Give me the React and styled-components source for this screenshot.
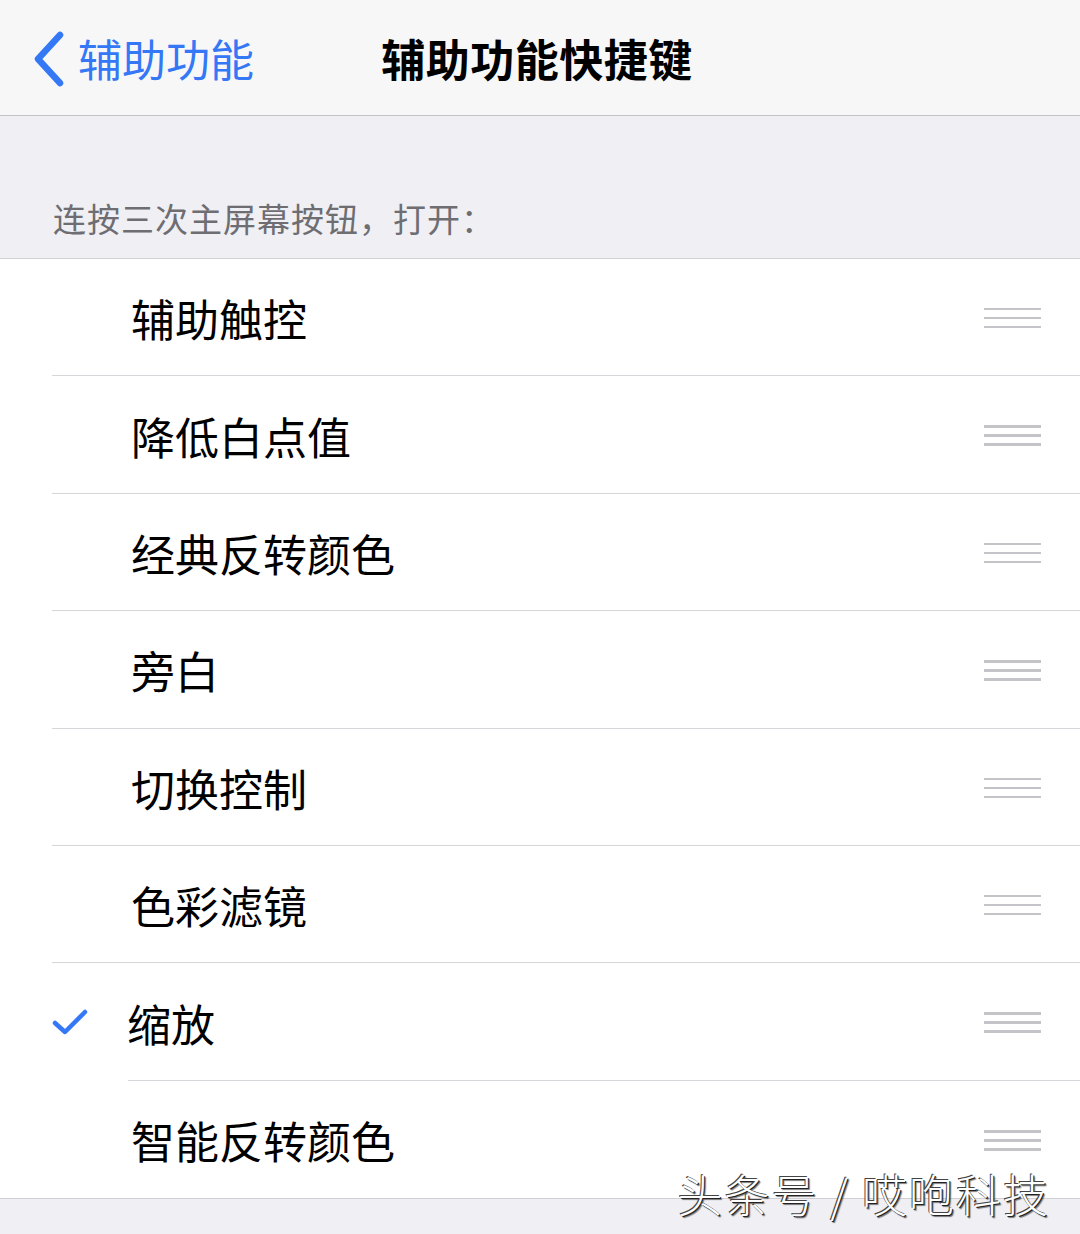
import styled, { createGlobalStyle } from 'styled-components'

const GlobalStyle = createGlobalStyle`
  html, body {
    margin: 0;
    padding: 0;
    background: #efeff4;
  }
  body {
    font-family: "Noto Sans CJK SC", "Noto Sans", sans-serif;
  }
`

const items = [
  { label: '辅助触控' },
  { label: '降低白点值' },
  { label: '经典反转颜色' },
  { label: '旁白' },
  { label: '切换控制' },
  { label: '色彩滤镜' },
  { label: '缩放', checked: true },
  { label: '智能反转颜色', last: true },
]

const ChevronLeft = () => (
  <svg width="36" height="56" viewBox="0 0 36 56">
    <path d="M29 4 L7 28 L29 52" fill="none" stroke="#3478f6" strokeWidth="6.5" strokeLinecap="round" strokeLinejoin="round" />
  </svg>
)

const Check = () => (
  <svg width="36" height="28" viewBox="0 0 36 28">
    <path d="M3 15 L13 24 L33 4" fill="none" stroke="#3478f6" strokeWidth="4.5" strokeLinecap="round" strokeLinejoin="round" />
  </svg>
)

const App = () => {
  return (
    <>
      <GlobalStyle />
      <Screen>
        <NavBar>
          <BackButton>
            <ChevronLeft />
            <span>辅助功能</span>
          </BackButton>
          <Title>辅助功能快捷键</Title>
          <div />
        </NavBar>
        <SectionHeader>连按三次主屏幕按钮，打开：</SectionHeader>
        <List>
          {items.map((item) => (
            <Row key={item.label}>
              <RowInner $inset={item.checked ? 76 : 0} $last={item.last}>
                <CheckSlot>{item.checked && <Check />}</CheckSlot>
                <Label $shift={item.checked ? -4 : 0}>{item.label}</Label>
                <Grip>
                  <i />
                  <i />
                  <i />
                </Grip>
              </RowInner>
            </Row>
          ))}
        </List>
        <Footer />
        <Watermark>头条号 / 哎咆科技</Watermark>
      </Screen>
    </>
  )
}

const Screen = styled.div`
  position: relative;
  width: 1080px;
  height: 1234px;
  overflow: hidden;
  background: #efeff4;
`

const NavBar = styled.div`
  height: 115px;
  display: grid;
  grid-template-columns: 1fr auto 1fr;
  align-items: center;
  background: #f7f7f8;
  border-bottom: 1px solid #c4c4c8;
`

const BackButton = styled.div`
  display: flex;
  align-items: center;
  gap: 11px;
  padding-left: 31px;
  color: #3478f6;
  font-size: 44px;
  line-height: 1;

  svg {
    margin-top: 2px;
  }
`

const Title = styled.div`
  font-size: 44px;
  font-weight: 700;
  color: #000;
  line-height: 1;
  letter-spacing: 0.5px;
  margin-left: -6px;
`

const SectionHeader = styled.div`
  height: 143px;
  box-sizing: border-box;
  padding: 0 0 16px 53px;
  display: flex;
  align-items: flex-end;
  font-size: 33px;
  letter-spacing: 1px;
  color: #6d6d72;
  border-bottom: 1px solid #d0d0d4;
`

const List = styled.div`
  background: #fff;
  border-bottom: 1px solid #d0d0d4;
`

const Row = styled.div`
  display: flex;
  padding-left: 52px;
`

const RowInner = styled.div`
  flex: 1;
  height: ${(p) => (p.$last ? 117.4 : 116.4)}px;
  display: flex;
  align-items: center;
  margin-left: ${(p) => p.$inset}px;
  padding-left: ${(p) => 80 - p.$inset}px;
  border-bottom: ${(p) => (p.$last ? 'none' : '1px solid #d6d6da')};
  position: relative;
`

const CheckSlot = styled.div`
  position: absolute;
  left: 0;
  margin-left: -76px;
  top: 50%;
  transform: translateY(-50%);
  display: flex;
`

const Label = styled.div`
  flex: 1;
  font-size: 44px;
  color: #000;
  line-height: 1;
  margin-left: ${(p) => p.$shift - 1}px;
  margin-top: 2px;
`

const Grip = styled.div`
  width: 57px;
  margin-right: 39px;
  margin-top: 2px;
  display: flex;
  flex-direction: column;
  gap: 6.5px;

  i {
    display: block;
    height: 2.5px;
    background: #c3c3c8;
  }
`

const Footer = styled.div`
  height: 37px;
  background: #efeff4;
`

const Watermark = styled.div`
  position: absolute;
  right: 30px;
  bottom: 18px;
  font-size: 45px;
  font-weight: 300;
  letter-spacing: 2px;
  color: #fff;
  line-height: 1;
  text-shadow: -1px -1px 0 #444, 1px 1px 0 #222, 2px 2px 1px rgba(0, 0, 0, 0.5);
`

export default App
